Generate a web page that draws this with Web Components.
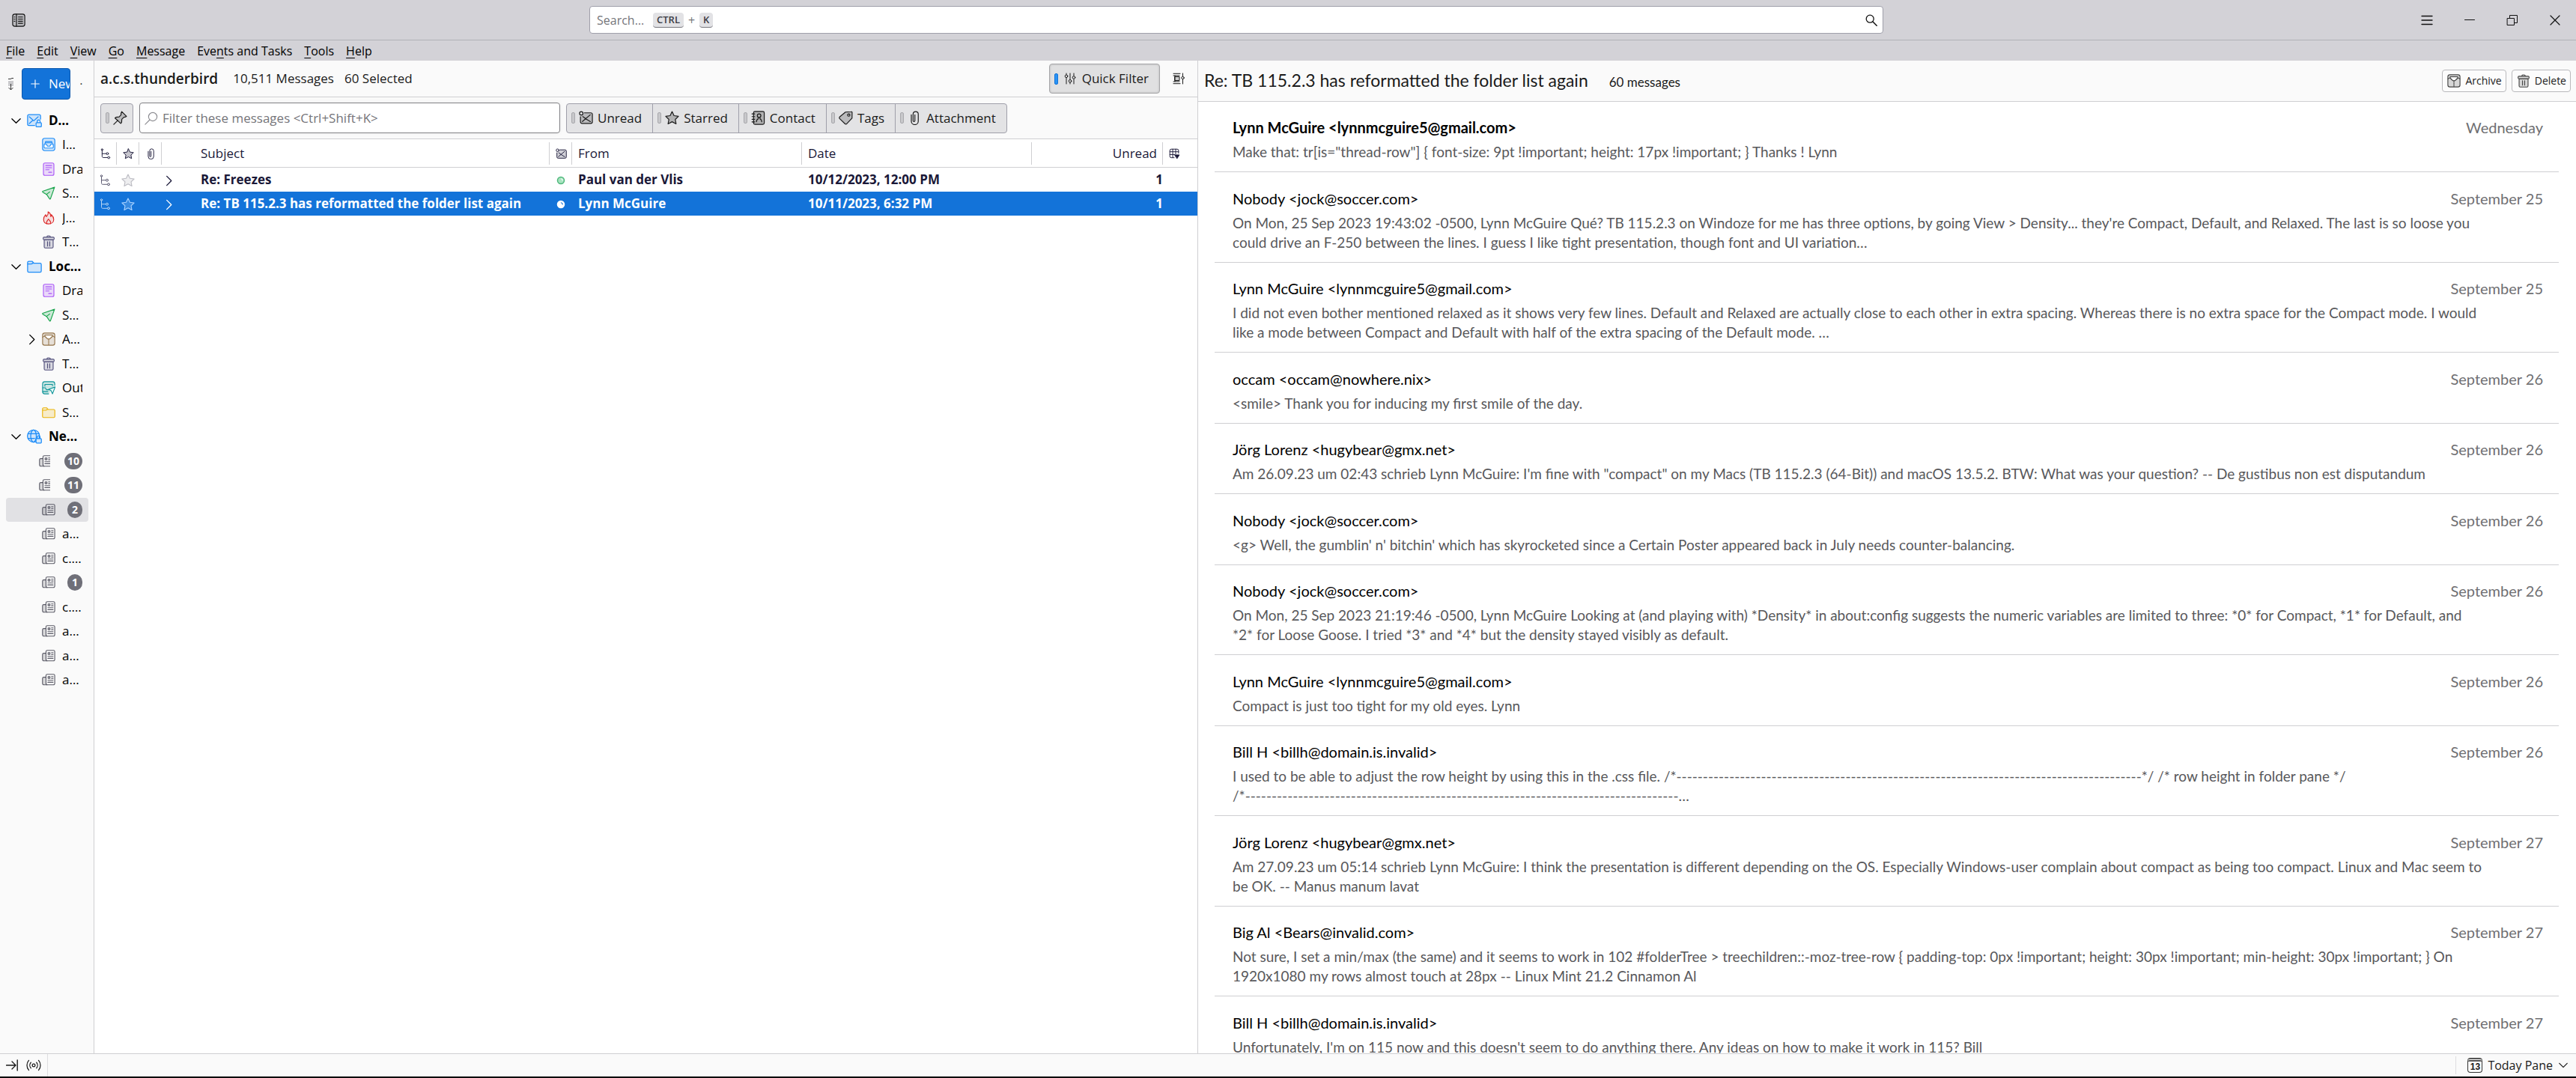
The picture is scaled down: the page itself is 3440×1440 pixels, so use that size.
<!DOCTYPE html>
<html lang="en">
<head>
<meta charset="utf-8">
<title>a.c.s.thunderbird</title>
<style>
    html, body{
        height: 100%;
        margin: 0;
    }
    body{
        font: 400 17px/24px "Open Sans", "Noto Sans", sans-serif;
        color: #1a1a1a;
        background: #000;
        overflow: hidden;
        --chrome: #d3d2d7;
        --pane: #fafafa;
        --line: #cfcfd2;
        --button: #e3e3e5;
        --button-border: #9f9faa;
        --accent: #1373d9;
    }
</style>
</head>
<body>
<mail-window></mail-window>

<script>
const ICONS = {
    spaces: '<rect x=".8" y=".8" width="14.4" height="14.4" rx="2.6" fill="#1a1a1a22"/><path d="M5.3.8v14.4M7.6 4.2h5M7.6 6.7h5M7.6 9.2h5M7.6 11.7h5M2.6 4.2h.9M2.6 6.7h.9M2.6 9.2h.9"/>',
    search: '<circle cx="6.2" cy="6.2" r="5" stroke-width="1.3"/><path d="M10 10l5.2 5.2" stroke-width="1.5"/>',
    find: '<circle cx="9.8" cy="6.2" r="5"/><path d="M6 10L.8 15.2"/>',
    menu: '<path d="M1 2.5h14M1 8h14M1 13.5h14" stroke-width="1.3"/>',
    minimize: '<path d="M1.5 7.5h13"/>',
    restore: '<path d="M1.5 5.5h9v9h-9zM4.5 5.5v-4h10v10h-4"/>',
    close: '<path d="M2 2l12 12M14 2L2 14" stroke-width="1.2"/>',
    down: '<path d="M2 5l6 6 6-6" stroke-width="1.4"/>',
    right: '<path d="M5 1.5l6.500 6.500L5 14.500" stroke-width="1.4"/>',
    plus: '<path d="M8 2v12M2 8h12" stroke-width="1.3"/>',
    account: '<path d="M14.5 6.500V3.200A1.500 1.500 0 0013 1.700H2.200A1.500 1.500 0 00.7 3.200v8.600a1.500 1.500 0 001.500 1.500h6" fill="#1d8cf833"/><path d="M2.500 4l4.800 4.300L12 4M2.500 11.200L6 8"/><rect x="9.700" y="10.200" width="5.700" height="4.500" rx=".8" fill="#d2e8fd"/><path d="M11 10V8.800a1.500 1.500 0 013 0V10"/>',
    inbox: '<rect x=".7" y=".7" width="14.6" height="14.6" rx="2.6" fill="#1d8cf833"/><path d="M3.500 7.500l.8-3h7.400l.8 3M4.800 6h6.400"/><path d="M2.500 7.800h3l1 2.200h3l1-2.200h3V11a1.200 1.200 0 01-1.200 1.200H3.700A1.200 1.200 0 012.500 11z" fill="#fff"/>',
    drafts: '<rect x="1.8" y=".7" width="12.4" height="14.6" rx="1.8" fill="#a855f733"/><path d="M4.500 3.700h7M4.500 6.200h7M4.500 8.700h4M8 11.700h3.500"/>',
    sent: '<path d="M15 1L.9 5.800c-.4.200-.3.800 0 1l4.600 2.700 3.600 5.300c.3.400.9.300 1-.1z" fill="#16a34a33"/><path d="M5.500 9.500l3.700-3"/>',
    junk: '<path d="M7.300.8c.8 3.200-1 4.300-2 5.700C4.600 6 4.500 5 4.500 4.200 2.600 6.200 2 8 2 10c0 3.200 2.400 5.200 6 5.200s6-2.200 6-5.200c0-2.500-1.200-4.300-2.800-5.800.1 1-.1 1.700-.7 2.300C10.500 3.800 9.600 1.800 7.300.8z" fill="#dc262622"/><path d="M6 15c-1.500-2.500.5-3.500 1.800-5.500C9 11.500 11.500 12.500 10 15"/>',
    trash: '<rect x="1.5" y="2.5" width="13" height="3" rx="1" fill="currentColor" fill-opacity=".2"/><path d="M2.700 5.500h10.600V14a1.300 1.300 0 01-1.300 1.300H4A1.300 1.300 0 012.700 14z" fill="currentColor" fill-opacity=".2"/><path d="M6 2.200C6 1 6.500.9 8 .9s2 .1 2 1.300M6.700 7.800V13M9.300 7.800V13"/>',
    folder: '<path d="M.7 12.700v-9A1.300 1.300 0 012 2.400h3.500l1.800 2H14a1.300 1.300 0 011.300 1.300v7A1.300 1.300 0 0114 14H2a1.300 1.300 0 01-1.300-1.300z" fill="currentColor" fill-opacity=".2"/><path d="M1 5.300h3.700l2-1"/>',
    archive: '<rect x=".8" y=".8" width="14.4" height="14.4" rx="2.4" fill="currentColor" fill-opacity=".2"/><path d="M1 5.700c.6-1.200 1.400-1.200 2.400-1l3.400 3.100h2.400l3.400-3.100c1-.2 1.800-.2 2.400 1M3.500 4.500V3.200h9v1.300"/><path d="M4 3.700h8L9 7.200H7z" fill="#fff" stroke="none"/><path d="M8 8v7" stroke-dasharray="1.5 1"/>',
    outbox: '<path d="M8 15.200H3.300A2.500 2.500 0 01.8 12.700V3.300A2.500 2.500 0 013.300.8h9.400a2.500 2.500 0 012.500 2.500V5" fill="#0d948833"/><path d="M1 8h3l1.300 2.300h3M3.500 6V4h9v1.500M1 12.500h6"/><path d="M15.700 7L8 9.800l2.800 1.500 1.700 3.900z" fill="#e6f8f7"/>',
    globe: '<circle cx="7" cy="7.500" r="6.500" fill="#1d8cf833"/><ellipse cx="7" cy="7.500" rx="3" ry="6.500"/><path d="M1.200 5h11.600M1.200 10h7"/><rect x="9.700" y="10.200" width="5.700" height="4.800" rx=".8" fill="#d2e8fd"/><path d="M11 10V8.800a1.500 1.500 0 013 0V10"/>',
    news: '<path d="M4.500 5H2.200A1.500 1.500 0 00.7 6.500v6A1.500 1.500 0 002.200 14H6" fill="currentColor" fill-opacity=".2"/><path d="M4.800 12.500V3a1.500 1.500 0 011.500-1.500h7.400A1.500 1.500 0 0115.200 3v9.500a1.500 1.500 0 01-1.500 1.500H6.300a1.500 1.500 0 01-1.500-1.500z"/><path d="M7.300 4.300h2.200v2H7.300zM11.300 4.200h2M11.300 6.300h2M7 8.700h6.200M7 11h6.200"/>',
    thread: '<path d="M2.500 3v8.500c0 1.200.6 1.800 1.800 1.800h6M2.500 7.700h6"/><circle cx="2.500" cy="2" r="1.200"/><circle cx="10" cy="7.700" r="1.500"/><circle cx="12" cy="13.300" r="1.500"/>',
    star: '<path d="M8 .9l2.200 4.600 5 .7-3.600 3.500.9 5L8 12.300l-4.500 2.400.9-5L.8 6.200l5-.7z" fill="currentColor" fill-opacity=".25"/>',
    clip: '<path d="M8.200 4.500v6.700a1 1 0 01-2 0V3.800a2.900 2.900 0 015.800 0v7.900a3.900 3.900 0 01-7.800 0V4.500"/>',
    unread: '<circle cx="2.700" cy="2.900" r="1.900"/><path d="M6 2.300h7.500A1.700 1.700 0 0115.200 4v8.500a1.700 1.700 0 01-1.700 1.700h-10a1.700 1.700 0 01-1.700-1.700v-6" fill="currentColor" fill-opacity=".2"/><path d="M4 12l8.800-7.500M4.500 6.500l4 3 4.500 2.700"/>',
    contact: '<rect x="2.8" y=".8" width="12" height="14.4" rx="1.5" fill="currentColor" fill-opacity=".25"/><path d="M1 3.500h3M1 6.500h3M1 9.500h3M1 12.500h3"/><circle cx="9" cy="5.500" r="2"/><path d="M6 12.300c.2-2.500 1.300-3 2-3.200V8M12 12.300c-.2-2.500-1.300-3-2-3.200V8"/>',
    tag: '<path d="M7.600 1.500L14 1a1 1 0 011.100 1L15 8.300 9 14.700a1.200 1.200 0 01-1.800 0L1 8.700A1.200 1.200 0 011 7z" fill="currentColor" fill-opacity=".2"/><circle cx="11.300" cy="4.800" r="1.300"/>',
    pin: '<path d="M9.800.9l5.300 5.300-1.700.9-1.300.2-2.300 2.300-.2 3.600-1 1L2.200 8.200l1-1 3.600-.3L9 4.500l-.1-1.600z" fill="currentColor" fill-opacity=".2"/><path d="M5.300 10.800L.8 15.300"/>',
    filter: '<path d="M3 1v1.500M3 7v8M8 1v8M8 13.500V15M13 1v3M13 9v6"/><circle cx="3" cy="4.800" r="1.800"/><circle cx="8" cy="11.300" r="1.800"/><circle cx="13" cy="6.500" r="1.800"/>',
    display: '<path d="M1 1.300h9M1 14.700h9M1 4h8M1 12h8M3 4v8"/><rect x="3" y="5.500" width="6" height="5" fill="currentColor" fill-opacity=".2"/><path d="M13.500 1v4M13.500 9v6"/><circle cx="13.500" cy="7" r="1.700"/>',
    columns: '<path d="M7.500 13.500H3.300a2 2 0 01-2-2V3.300a2 2 0 012-2h8.400a2 2 0 012 2V7M1.300 5h12.400M5.400 1.300v12M9.600 1.300V8M1.300 9h7"/><path d="M8.500 9.500h6.300l-3.100 5z" fill="currentColor"/>',
    dot: '<circle cx="8" cy="8" r="6" fill="var(--dot-fill)" stroke-width="2"/><path d="M8.500 5A3 3 0 0111 8" stroke="var(--dot-mark)" stroke-width="1.6"/>',
    collapse: '<path d="M.5 8h12M8 3l5 5-5 5" stroke-width="1.3"/><path d="M15.200 1v14" stroke-width="1.4"/>',
    radio: '<circle cx="8" cy="8" r="1.5"/><path d="M5 5a4.500 4.500 0 000 6M11 5a4.500 4.500 0 010 6M2.800 2.700a8 8 0 000 10.600M13.200 2.700a8 8 0 010 10.600"/>'
};

class MailIcon extends HTMLElement{
    constructor() {
        super();
        this.attachShadow({mode: 'open'});
    }

    connectedCallback(){
        this.shadowRoot.innerHTML = `
        <style>
        :host{
            display: inline-block;
            flex: none;
            width: var(--icon-size, 18px);
            height: var(--icon-size, 18px);
        }
        svg{
            display: block;
            width: var(--icon-size, 18px);
            height: var(--icon-size, 18px);
        }
        </style>
        <svg viewBox="0 0 16 16" fill="none" stroke="currentColor" stroke-linecap="round" stroke-linejoin="round" aria-hidden="true">${ICONS[this.getAttribute('name')]}</svg>`;
    }
}
window.customElements.define('mail-icon', MailIcon);


class TitleBar extends HTMLElement{
    constructor() {
        super();
        this.attachShadow({mode: 'open'}).innerHTML = `
        <style>
        :host{
            display: grid;
            grid-template-columns: 787fr 1728fr 925fr;
            align-items: center;
            height: 53px;
            background: var(--chrome);
            border-bottom: 1px solid #b1b1b7;
        }
        button{
            display: inline-flex;
            padding: 0;
            border: 0;
            background: none;
            color: #111;
        }
        .spaces{
            display: flex;
            padding-left: 16px;
        }
        .search{
            display: flex;
            align-items: center;
            box-sizing: border-box;
            height: 37px;
            padding: 0 7px 0 9px;
            border: 1px solid var(--button-border);
            border-radius: 4px;
            background: #fff;
            font-size: 16px;
            color: #75757a;
            --icon-size: 16px;
        }
        .search input{
            width: 75px;
            padding: 0;
            border: 0;
            outline: none;
            font: inherit;
            background: none;
        }
        .search input::placeholder{
            color: #75757a;
            opacity: 1;
        }
        .gap{
            flex: 1;
        }
        kbd{
            box-sizing: border-box;
            height: 20px;
            padding: 0 5px;
            border-bottom: 1px solid #77777d;
            border-radius: 4px;
            background: #e2e2e5;
            font: 600 13px/19px "Open Sans", sans-serif;
            color: #3c3c44;
        }
        .plus{
            margin: 0 6px;
        }
        .controls{
            display: flex;
            justify-content: flex-end;
            align-items: center;
            gap: 41px;
            padding-right: 20px;
            --icon-size: 16px;
        }
        </style>
        <div class="spaces"><button aria-label="Spaces"><mail-icon name="spaces"></mail-icon></button></div>
        <div class="search">
            <input type="text" placeholder="Search…" aria-label="Search">
            <kbd>CTRL</kbd><span class="plus">+</span><kbd>K</kbd>
            <span class="gap"></span>
            <button aria-label="Start search"><mail-icon name="search"></mail-icon></button>
        </div>
        <div class="controls">
            <button aria-label="Application menu"><mail-icon name="menu"></mail-icon></button>
            <button aria-label="Minimize"><mail-icon name="minimize"></mail-icon></button>
            <button aria-label="Restore"><mail-icon name="restore"></mail-icon></button>
            <button aria-label="Close"><mail-icon name="close"></mail-icon></button>
        </div>`;
    }
}
window.customElements.define('title-bar', TitleBar);


class MenuBar extends HTMLElement{
    constructor() {
        super();
        // the underscore stands before the access key
        const items = ['_File', '_Edit', '_View', '_Go', '_Message', 'Eve_nts and Tasks', '_Tools', '_Help'];
        this.attachShadow({mode: 'open'}).innerHTML = `
        <style>
        :host{
            display: flex;
            gap: 16px;
            height: 27px;
            padding-left: 8px;
            background: var(--chrome);
        }
        button{
            padding: 0;
            border: 0;
            background: none;
            font: inherit;
            font-size: 16px;
            line-height: 29px;
            color: #000;
        }
        u{
            text-underline-offset: 3px;
        }
        </style>
        ${items.map(item => `<button>${item.replace(/_(.)/, '<u>$1</u>')}</button>`).join('')}`;
    }
}
window.customElements.define('menu-bar', MenuBar);


class FolderRow extends HTMLElement{
    constructor() {
        super();
        this.attachShadow({mode: 'open'});
    }

    connectedCallback(){
        const count = this.getAttribute('count');
        const twisty = this.getAttribute('twisty');

        this.shadowRoot.innerHTML = `
        <style>
        :host{
            display: block;
            margin: 0 7px 0 8px;
        }
        a{
            display: flex;
            align-items: center;
            box-sizing: border-box;
            height: 32px;
            padding-right: 8px;
            border-radius: 4px;
            color: #000;
            text-decoration: none;
            --icon-size: 18px;
        }
        :host([selected]) a{
            background: #e1e1e4;
        }
        .twisty{
            display: flex;
            justify-content: flex-end;
            width: 42px;
            margin-right: 6px;
            --icon-size: 15px;
        }
        :host([account]) .twisty{
            width: 21px;
            margin-right: 7px;
        }
        :host([account]) .icon{
            --icon-size: 20px;
        }
        .icon{
            color: var(--tint);
            overflow: hidden;
        }
        .name{
            flex: 1;
            min-width: 0;
            margin-left: 9px;
            overflow: hidden;
            white-space: nowrap;
        }
        :host([account]) .name{
            font-weight: 700;
        }
        .badge{
            min-width: 20px;
            box-sizing: border-box;
            margin-left: auto;
            padding: 0 4px;
            border-radius: 11px;
            background: #6f6f78;
            color: #fff;
            font-size: 14px;
            font-weight: 700;
            line-height: 22px;
            text-align: center;
        }
        :host([wide]) .twisty{
            width: 38px;
        }
        :host([wide]) .icon{
            width: 15px;
        }
        </style>
        <a href="#">
            <span class="twisty">${twisty ? `<mail-icon name="${twisty}"></mail-icon>` : ''}</span>
            <mail-icon class="icon" name="${this.getAttribute('icon')}"></mail-icon>
            ${count ? `<span class="badge">${count}</span>` : '<span class="name"><slot></slot></span>'}
        </a>`;
    }
}
window.customElements.define('folder-row', FolderRow);


class FolderPane extends HTMLElement{
    constructor() {
        super();
        this.attachShadow({mode: 'open'}).innerHTML = `
        <style>
        :host{
            display: block;
            background: var(--pane);
            border-right: 1px solid var(--line);
            overflow: hidden;
        }
        header{
            display: flex;
            align-items: center;
            height: 62px;
            padding: 0 14px 0 11px;
        }
        header button{
            padding: 0;
            border: 0;
            background: none;
            color: #333;
        }
        .get{
            width: 7px;
            height: 18px;
            margin-right: 11px;
        }
        .get svg{
            display: block;
        }
        header .new{
            display: flex;
            align-items: center;
            box-sizing: border-box;
            width: 67px;
            height: 42px;
            padding: 0 0 0 10px;
            border: 1px solid #0b57ad;
            border-radius: 4px;
            background: var(--accent);
            color: #fff;
            font: inherit;
            overflow: hidden;
            --icon-size: 14px;
        }
        .new span{
            margin-left: 11px;
        }
        .more{
            margin-left: 12px;
            font-size: 16px;
        }
        nav{
            padding-top: 2px;
        }
        nav folder-row:nth-child(even){
            margin-bottom: 1px;
        }
        </style>
        <header>
            <button class="get" aria-label="Get messages"><svg width="7" height="18" fill="none" stroke="currentColor"><path d="M0 5h7v7H0z" fill="#c9c9cc" stroke="none"/><path d="M0 2.500h3l2-1h2M3.500 9v8M.5 14l3 3 3-3"/></svg></button>
            <button class="new"><mail-icon name="plus"></mail-icon><span>New</span></button>
            <button class="more" aria-label="Folder pane options">·</button>
        </header>
        <nav aria-label="Folders">
            <folder-row account twisty="down" icon="account" style="--tint:#1d8cf8">D…</folder-row>
            <folder-row icon="inbox" style="--tint:#1d8cf8">I…</folder-row>
            <folder-row icon="drafts" style="--tint:#a855f7">Dra</folder-row>
            <folder-row icon="sent" style="--tint:#16a34a">S…</folder-row>
            <folder-row icon="junk" style="--tint:#dc2626">J…</folder-row>
            <folder-row icon="trash" style="--tint:#504e7a">T…</folder-row>
            <folder-row account twisty="down" icon="folder" style="--tint:#1d8cf8">Loc…</folder-row>
            <folder-row icon="drafts" style="--tint:#a855f7">Dra</folder-row>
            <folder-row icon="sent" style="--tint:#16a34a">S…</folder-row>
            <folder-row twisty="right" icon="archive" style="--tint:#94744a">A…</folder-row>
            <folder-row icon="trash" style="--tint:#504e7a">T…</folder-row>
            <folder-row icon="outbox" style="--tint:#0d9499">Out</folder-row>
            <folder-row icon="folder" style="--tint:#eab308">S…</folder-row>
            <folder-row account twisty="down" icon="globe" style="--tint:#1d8cf8">Ne…</folder-row>
            <folder-row wide icon="news" count="10" style="--tint:#5a5a66"></folder-row>
            <folder-row wide icon="news" count="11" style="--tint:#5a5a66"></folder-row>
            <folder-row selected icon="news" count="2" style="--tint:#5a5a66"></folder-row>
            <folder-row icon="news" style="--tint:#5a5a66">a…</folder-row>
            <folder-row icon="news" style="--tint:#5a5a66">c.…</folder-row>
            <folder-row icon="news" count="1" style="--tint:#5a5a66"></folder-row>
            <folder-row icon="news" style="--tint:#5a5a66">c.…</folder-row>
            <folder-row icon="news" style="--tint:#5a5a66">a…</folder-row>
            <folder-row icon="news" style="--tint:#5a5a66">a…</folder-row>
            <folder-row icon="news" style="--tint:#5a5a66">a…</folder-row>
        </nav>`;
    }
}
window.customElements.define('folder-pane', FolderPane);


class ToggleButton extends HTMLElement{
    constructor() {
        super();
        this.attachShadow({mode: 'open'});
    }

    connectedCallback(){
        this.shadowRoot.innerHTML = `
        <style>
        :host{
            display: inline-flex;
        }
        button{
            display: flex;
            align-items: center;
            box-sizing: border-box;
            height: 40px;
            padding: 0 14px 0 6px;
            border: 1px solid var(--button-border);
            border-radius: var(--radius, 4px);
            background: var(--button);
            font: inherit;
            color: #1a1a1a;
        }
        i{
            box-sizing: border-box;
            width: 5px;
            height: 15px;
            margin-right: 5px;
            border: 1px solid #a9a9ad;
            border-radius: 2px;
            background: #c8c8cb;
        }
        mail-icon{
            --icon-size: 19px;
        }
        span{
            margin-left: 6px;
        }
        :host([compact]) button{
            padding-right: 7px;
        }
        :host([compact]) span{
            display: none;
        }
        :host([pressed]) button{
            border-color: #a6a6a8;
            background: #e0e0e1;
            box-shadow: inset 0 0 3px #b5b5b8;
        }
        :host([pressed]) i{
            border-color: #1373d9;
            background: #2a94f4;
            margin-right: 8px;
        }
        :host([pressed]) span{
            margin-left: 8px;
        }
        :host([pressed]) mail-icon{
            --icon-size: 16px;
        }
        </style>
        <button aria-pressed="${this.hasAttribute('pressed')}" aria-label="${this.getAttribute('label') || this.textContent}"><i></i><mail-icon name="${this.getAttribute('icon')}"></mail-icon><span><slot></slot></span></button>`;
    }
}
window.customElements.define('toggle-button', ToggleButton);


class ThreadPane extends HTMLElement{
    constructor() {
        super();
        this.attachShadow({mode: 'open'}).innerHTML = `
        <style>
        :host{
            display: block;
            background: #fff;
            border-right: 1px solid var(--line);
            overflow: hidden;
        }
        header, .quick-filter{
            display: flex;
            align-items: center;
            box-sizing: border-box;
            padding: 0 8px;
            border-bottom: 1px solid var(--line);
            background: var(--pane);
        }
        header{
            height: 49px;
        }
        h1{
            margin: 0 20px 0 0;
            font-size: 19px;
            font-weight: 600;
        }
        header span{
            margin-right: 14px;
        }
        header toggle-button{
            margin-left: auto;
        }
        header button{
            display: flex;
            margin: 0 9px 0 17px;
            padding: 0;
            border: 0;
            background: none;
            color: #1a1a1a;
            --icon-size: 16px;
        }
        .quick-filter{
            height: 56px;
        }
        label{
            display: flex;
            align-items: center;
            box-sizing: border-box;
            width: 562px;
            height: 41px;
            margin: 0 8px;
            padding-left: 6px;
            border: 1px solid #808084;
            border-radius: 4px;
            background: #fff;
            color: #8b8b90;
            box-shadow: 0 0 6px #0000000d;
        }
        input{
            flex: 1;
            margin-left: 6px;
            padding: 0;
            border: 0;
            outline: none;
            font: inherit;
            background: none;
        }
        input::placeholder{
            color: #75757a;
            opacity: 1;
        }
        .group{
            display: flex;
        }
        .group toggle-button{
            --radius: 0;
            margin-right: -1px;
        }
        .group toggle-button:first-child{
            --radius: 4px 0 0 4px;
        }
        .group toggle-button:last-child{
            --radius: 0 4px 4px 0;
        }
        table{
            width: 100%;
            border-collapse: collapse;
            table-layout: fixed;
            color: #1a1838;
        }
        th{
            height: 37px;
            padding: 0 8px;
            border-bottom: 1px solid var(--line);
            background: linear-gradient(var(--line), var(--line)) right / 1px 30px no-repeat;
            font-weight: 400;
            text-align: left;
            --icon-size: 15px;
        }
        td{
            height: 32px;
            padding: 0 8px;
            font-weight: 700;
            white-space: nowrap;
        }
        th.icon, td.icon{
            padding: 0;
            text-align: center;
        }
        td.icon.thread{
            --icon-size: 16px;
            opacity: .7;
        }
        td.star{
            color: #bcbcc3;
        }
        td.status{
            color: #4fb87c;
            --dot-fill: #a7e3bf;
            --dot-mark: #fff;
            --icon-size: 12px;
        }
        mail-icon{
            vertical-align: middle;
        }
        th:last-child{
            background: none;
        }
        th.subject{
            padding-left: 52px;
        }
        td.subject{
            padding-left: 2px;
        }
        td.subject mail-icon{
            --icon-size: 15px;
            margin-right: 35px;
        }
        .num{
            text-align: right;
        }
        td.num{
            padding-right: 0;
        }
        tr[aria-selected]{
            background: var(--accent);
            color: #fff;
        }
        tr[aria-selected] .star{
            color: #a9d2ff;
        }
        tr[aria-selected] .status{
            color: #fff;
            --dot-fill: #fff;
            --dot-mark: #1373d9;
        }
        </style>
        <header>
            <h1>a.c.s.thunderbird</h1>
            <span>10,511 Messages</span>
            <span>60 Selected</span>
            <toggle-button pressed icon="filter">Quick Filter</toggle-button>
            <button aria-label="Message list display options"><mail-icon name="display"></mail-icon></button>
        </header>
        <div class="quick-filter">
            <toggle-button compact icon="pin" label="Keep filters applied"></toggle-button>
            <label><mail-icon name="find"></mail-icon><input type="text" placeholder="Filter these messages &lt;Ctrl+Shift+K&gt;" aria-label="Filter these messages"></label>
            <div class="group">
                <toggle-button icon="unread">Unread</toggle-button>
                <toggle-button icon="star">Starred</toggle-button>
                <toggle-button icon="contact">Contact</toggle-button>
                <toggle-button icon="tag">Tags</toggle-button>
                <toggle-button icon="clip">Attachment</toggle-button>
            </div>
        </div>
        <table>
            <colgroup>
                <col style="width:30px"><col style="width:30px"><col style="width:30px">
                <col><col style="width:30px"><col style="width:307px"><col style="width:307px">
                <col style="width:175px"><col style="width:46px">
            </colgroup>
            <thead>
                <tr>
                    <th class="icon"><mail-icon name="thread"></mail-icon></th>
                    <th class="icon"><mail-icon name="star"></mail-icon></th>
                    <th class="icon"><mail-icon name="clip"></mail-icon></th>
                    <th class="subject">Subject</th>
                    <th class="icon"><mail-icon name="unread"></mail-icon></th>
                    <th>From</th>
                    <th>Date</th>
                    <th class="num">Unread</th>
                    <th><mail-icon name="columns"></mail-icon></th>
                </tr>
            </thead>
            <tbody>
                <tr>
                    <td class="icon thread"><mail-icon name="thread"></mail-icon></td>
                    <td class="icon star"><mail-icon name="star"></mail-icon></td>
                    <td></td>
                    <td class="subject"><mail-icon name="right"></mail-icon>Re: Freezes</td>
                    <td class="icon status"><mail-icon name="dot"></mail-icon></td>
                    <td>Paul van der Vlis</td>
                    <td>10/12/2023, 12:00 PM</td>
                    <td class="num">1</td>
                    <td></td>
                </tr>
                <tr aria-selected="true">
                    <td class="icon thread"><mail-icon name="thread"></mail-icon></td>
                    <td class="icon star"><mail-icon name="star"></mail-icon></td>
                    <td></td>
                    <td class="subject"><mail-icon name="right"></mail-icon>Re: TB 115.2.3 has reformatted the folder list again</td>
                    <td class="icon status"><mail-icon name="dot"></mail-icon></td>
                    <td>Lynn McGuire</td>
                    <td>10/11/2023, 6:32 PM</td>
                    <td class="num">1</td>
                    <td></td>
                </tr>
            </tbody>
        </table>`;
    }
}
window.customElements.define('thread-pane', ThreadPane);


class MessageSummary extends HTMLElement{
    constructor() {
        super();
        this.attachShadow({mode: 'open'});
    }

    connectedCallback(){
        this.shadowRoot.innerHTML = `
        <style>
        :host{
            display: block;
            margin: 0 23px 0 22px;
            padding: 21px 21px 13px 24px;
            border-bottom: 1px solid var(--line);
            font-family: Lato, "Open Sans", sans-serif;
            font-size: 20px;
            line-height: 26px;
        }
        div{
            display: flex;
            justify-content: space-between;
        }
        a{
            color: #000;
            text-decoration: none;
        }
        :host([unread]) a{
            font-weight: 700;
        }
        time{
            color: #6f6f72;
        }
        p{
            margin: 7px 0 0;
            font-size: 19px;
            white-space: pre-line;
            color: #58585b;
        }
        </style>
        <div><a href="#"></a><time>${this.getAttribute('date')}</time></div>
        <p><slot></slot></p>`;
        this.shadowRoot.querySelector('a').textContent = this.getAttribute('from');
    }
}
window.customElements.define('message-summary', MessageSummary);


const MESSAGES = [
    ['Lynn McGuire <lynnmcguire5@gmail.com>', 'Wednesday', 'Make that: tr[is="thread-row"] { font-size: 9pt !important; height: 17px !important; } Thanks ! Lynn'],
    ['Nobody <jock@soccer.com>', 'September 25', 'On Mon, 25 Sep 2023 19:43:02 -0500, Lynn McGuire Qué? TB 115.2.3 on Windoze for me has three options, by going View > Density... they\'re Compact, Default, and Relaxed. The last is so loose you\ncould drive an F-250 between the lines. I guess I like tight presentation, though font and UI variation…'],
    ['Lynn McGuire <lynnmcguire5@gmail.com>', 'September 25', 'I did not even bother mentioned relaxed as it shows very few lines. Default and Relaxed are actually close to each other in extra spacing. Whereas there is no extra space for the Compact mode. I would\nlike a mode between Compact and Default with half of the extra spacing of the Default mode. …'],
    ['occam <occam@nowhere.nix>', 'September 26', '<smile> Thank you for inducing my first smile of the day.'],
    ['Jörg Lorenz <hugybear@gmx.net>', 'September 26', 'Am 26.09.23 um 02:43 schrieb Lynn McGuire: I\'m fine with "compact" on my Macs (TB 115.2.3 (64-Bit)) and macOS 13.5.2. BTW: What was your question? -- De gustibus non est disputandum'],
    ['Nobody <jock@soccer.com>', 'September 26', '<g> Well, the gumblin\' n\' bitchin\' which has skyrocketed since a Certain Poster appeared back in July needs counter-balancing.'],
    ['Nobody <jock@soccer.com>', 'September 26', 'On Mon, 25 Sep 2023 21:19:46 -0500, Lynn McGuire Looking at (and playing with) *Density* in about:config suggests the numeric variables are limited to three: *0* for Compact, *1* for Default, and\n*2* for Loose Goose. I tried *3* and *4* but the density stayed visibly as default.'],
    ['Lynn McGuire <lynnmcguire5@gmail.com>', 'September 26', 'Compact is just too tight for my old eyes. Lynn'],
    ['Bill H <billh@domain.is.invalid>', 'September 26', 'I used to be able to adjust the row height by using this in the .css file. /*' + '-'.repeat(88) + '*/ /* row height in folder pane */\n/*' + '-'.repeat(82) + '…'],
    ['Jörg Lorenz <hugybear@gmx.net>', 'September 27', 'Am 27.09.23 um 05:14 schrieb Lynn McGuire: I think the presentation is different depending on the OS. Especially Windows-user complain about compact as being too compact. Linux and Mac seem to\nbe OK. -- Manus manum lavat'],
    ['Big Al <Bears@invalid.com>', 'September 27', 'Not sure, I set a min/max (the same) and it seems to work in 102 #folderTree > treechildren::-moz-tree-row { padding-top: 0px !important; height: 30px !important; min-height: 30px !important; } On\n1920x1080 my rows almost touch at 28px -- Linux Mint 21.2 Cinnamon Al'],
    ['Bill H <billh@domain.is.invalid>', 'September 27', 'Unfortunately, I\'m on 115 now and this doesn\'t seem to do anything there. Any ideas on how to make it work in 115? Bill']
];

class MessageView extends HTMLElement{
    constructor() {
        super();
        this.attachShadow({mode: 'open'}).innerHTML = `
        <style>
        :host{
            display: flex;
            flex-direction: column;
            min-height: 0;
            background: #fff;
            overflow: hidden;
        }
        header{
            display: flex;
            flex: none;
            align-items: center;
            box-sizing: border-box;
            height: 55px;
            padding: 0 7px 0 8px;
            border-bottom: 1px solid var(--line);
            background: var(--pane);
        }
        .title{
            display: flex;
            flex: 1;
            align-items: baseline;
            font-family: Lato, "Open Sans", sans-serif;
        }
        h2{
            margin: 0 28px 0 0;
            font-size: 23px;
            font-weight: 400;
        }
        button{
            display: flex;
            align-items: center;
            box-sizing: border-box;
            height: 30px;
            margin-left: 7px;
            padding: 0 5px 0 6px;
            border: 1px solid #b9b9bc;
            border-radius: 4px;
            background: #fcfcfc;
            font: inherit;
            font-size: 14px;
            color: #1a1a1a;
        }
        button mail-icon{
            margin-right: 6px;
            color: #444;
        }
        .list{
            flex: 1;
            min-height: 0;
            overflow: hidden;
        }
        message-summary:nth-child(even){
            padding-top: 22px;
        }
        </style>
        <header>
            <div class="title"><h2>Re: TB 115.2.3 has reformatted the folder list again</h2><span>60 messages</span></div>
            <button><mail-icon name="archive"></mail-icon>Archive</button>
            <button><mail-icon name="trash"></mail-icon>Delete</button>
        </header>
        <div class="list"></div>`;

        const list = this.shadowRoot.querySelector('.list');
        MESSAGES.forEach(([from, date, text], index) =>{
            const item = document.createElement('message-summary');
            item.setAttribute('from', from);
            item.setAttribute('date', date);
            item.toggleAttribute('unread', index == 0);
            item.textContent = text;
            list.append(item);
        });
    }
}
window.customElements.define('message-view', MessageView);


class StatusBar extends HTMLElement{
    constructor() {
        super();
        this.attachShadow({mode: 'open'}).innerHTML = `
        <style>
        :host{
            display: flex;
            align-items: center;
            height: 30px;
            border-top: 1px solid var(--line);
            background: var(--pane);
        }
        button{
            display: flex;
            align-items: center;
            padding: 0;
            border: 0;
            background: none;
            font: inherit;
            font-size: 16px;
            color: #1a1a1a;
        }
        .left{
            display: flex;
            align-items: center;
            gap: 11px;
            height: 100%;
            padding: 0 8px;
            border-right: 1px solid #dedee0;
            --icon-size: 16px;
        }
        .left button:last-child{
            --icon-size: 20px;
        }
        .today{
            height: 24px;
            margin-left: auto;
            padding: 0 10px 0 15px;
            border-left: 1px solid #dedee0;
            --icon-size: 14px;
        }
        .day{
            box-sizing: border-box;
            width: 20px;
            height: 20px;
            margin-right: 7px;
            border: 1px solid #333;
            border-top: 5px double #555;
            border-radius: 4px;
            font: 700 12px/14px "Liberation Sans", sans-serif;
            text-align: center;
        }
        .today mail-icon{
            margin-left: 7px;
        }
        </style>
        <div class="left">
            <button aria-label="Show spaces toolbar"><mail-icon name="collapse"></mail-icon></button>
            <button aria-label="Online status"><mail-icon name="radio"></mail-icon></button>
        </div>
        <button class="today"><span class="day">13</span>Today Pane<mail-icon name="down"></mail-icon></button>`;
    }
}
window.customElements.define('status-bar', StatusBar);


class MailWindow extends HTMLElement{
    constructor() {
        super();
        this.attachShadow({mode: 'open'}).innerHTML = `
        <style>
        :host{
            display: flex;
            flex-direction: column;
            box-sizing: border-box;
            height: 100vh;
            border-bottom: 2px solid #000;
        }
        title-bar, menu-bar, status-bar{
            flex: none;
        }
        main{
            display: grid;
            grid-template-columns: 126px minmax(0, 1474fr) minmax(0, 1840fr);
            grid-template-rows: minmax(0, 1fr);
            flex: 1;
            min-height: 0;
        }
        </style>
        <title-bar></title-bar>
        <menu-bar></menu-bar>
        <main>
            <folder-pane></folder-pane>
            <thread-pane></thread-pane>
            <message-view></message-view>
        </main>
        <status-bar></status-bar>`;
    }
}
window.customElements.define('mail-window', MailWindow);
</script>
</body>
</html>
